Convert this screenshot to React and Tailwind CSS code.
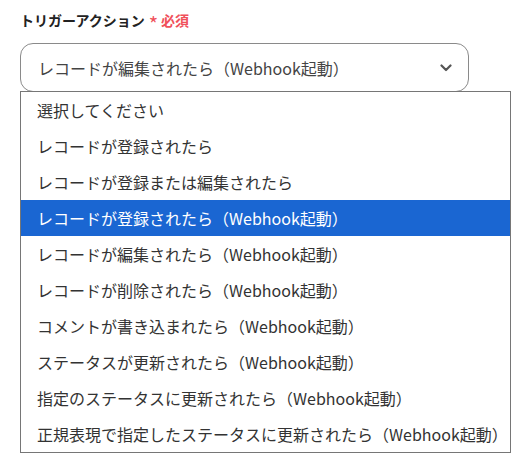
const options = [
  "選択してください",
  "レコードが登録されたら",
  "レコードが登録または編集されたら",
  "レコードが登録されたら（Webhook起動）",
  "レコードが編集されたら（Webhook起動）",
  "レコードが削除されたら（Webhook起動）",
  "コメントが書き込まれたら（Webhook起動）",
  "ステータスが更新されたら（Webhook起動）",
  "指定のステータスに更新されたら（Webhook起動）",
  "正規表現で指定したステータスに更新されたら（Webhook起動）",
];

export default function App() {
  const selected = 3;
  return (
    <div
      className="h-[468px] w-[532px] bg-white px-5 pt-[10px]"
      style={{ fontFamily: '"Noto Sans CJK JP", "Noto Sans", sans-serif' }}
    >
      {/* Label */}
      <div className="flex items-center h-5 gap-[4px]">
        <span className="text-[14px] font-bold text-[#222]">トリガーアクション</span>
        <span className="flex items-center gap-[3px] text-[#f0505a] text-[14px] font-semibold">
          <span className="text-[20px] leading-none mt-[7px] font-normal">*</span>
          必須
        </span>
      </div>

      {/* Select */}
      <div className="mt-[13px] w-[449px] h-[49px] rounded-[13px] border border-[#8a8a8a] flex items-center justify-between pl-[17px] pr-[16px]">
        <span className="text-[16px] text-[#444]">レコードが編集されたら（Webhook起動）</span>
        <svg width="12" height="8" viewBox="0 0 12 8" fill="none">
          <path d="M1.5 1.5 L6 6 L10.5 1.5" stroke="#555" strokeWidth="2.2" strokeLinecap="round" strokeLinejoin="round" />
        </svg>
      </div>

      {/* Dropdown list */}
      <div className="-mt-px w-[491px] border border-[#767676] bg-white">
        {options.map((o, i) => (
          <div
            key={o}
            className={
              "h-9 flex items-center px-4 text-[16px] whitespace-nowrap " +
              (i === selected ? "bg-[#1a66d2] text-white" : "text-[#333]")
            }
          >
            {o}
          </div>
        ))}
      </div>
    </div>
  );
}
